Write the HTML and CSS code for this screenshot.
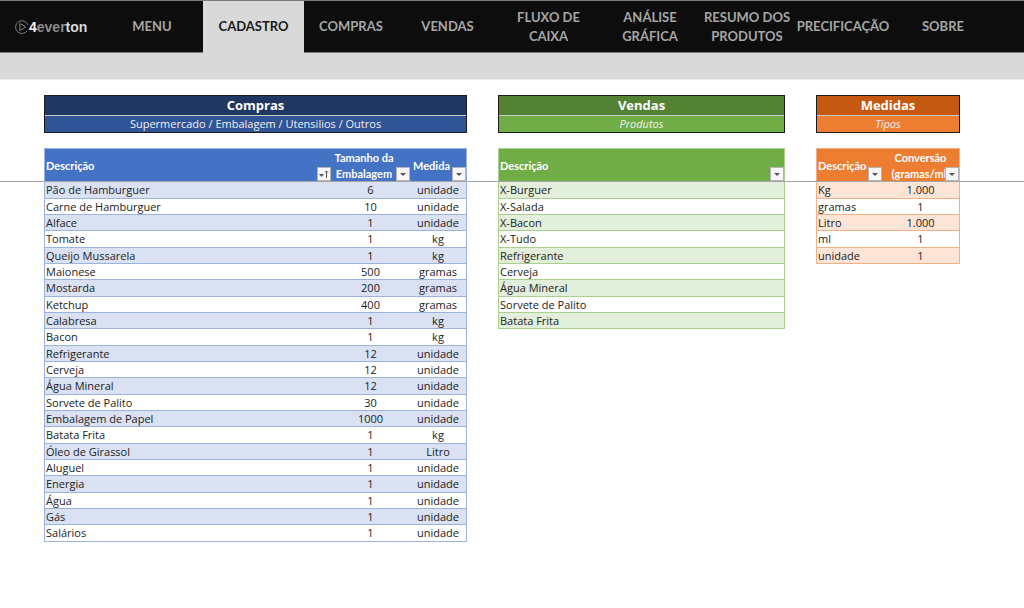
FILE: index.html
```html
<!DOCTYPE html>
<html lang="pt-BR">
<head>
<meta charset="utf-8">
<title>Cadastro</title>
<link rel="stylesheet" href="styles.css">
</head>
<body>
<header class="topbar">
  <a class="logo" href="#" aria-label="4everton">
    <svg class="logo-mark" viewBox="0 0 14 14" aria-hidden="true"><path d="M12.200 10.800A6.400 6.400 0 1 1 13 5M4.800 3.500v7L10.800 7z" fill="none" stroke="currentColor" stroke-width="1"/></svg>
    <span class="logo-text"><b class="logo-four">4</b>ever<b class="logo-ton">ton</b></span>
  </a>
  <nav class="tabs">
    <a class="tab" href="#">MENU</a>
    <a class="tab active" href="#" aria-current="page">CADASTRO</a>
    <a class="tab" href="#">COMPRAS</a>
    <a class="tab" href="#">VENDAS</a>
    <a class="tab" href="#">FLUXO DE<br>CAIXA</a>
    <a class="tab" href="#">ANÁLISE<br>GRÁFICA</a>
    <a class="tab" href="#">RESUMO DOS<br>PRODUTOS</a>
    <a class="tab" href="#">PRECIFICAÇÃO</a>
    <a class="tab" href="#">SOBRE</a>
  </nav>
</header>
<div class="band"></div>
<main class="sheet">
  <section class="block blue">
    <div class="title"><h2>Compras</h2><p class="plain">Supermercado / Embalagem / Utensilios / Outros</p></div>
    <table>
      <colgroup><col class="c-desc"><col class="c-size"><col class="c-unit"></colgroup>
      <thead><tr>
        <th>Descrição<button class="filter" aria-label="Filtrar Descrição"><svg viewBox="0 0 12 12"><path d="M1 6h5L3.500 9z" fill="#555"/><path d="M8.500 10V3M7 4.500L8.500 3 10 4.500" fill="none" stroke="#555"/></svg></button></th>
        <th class="beside">Tamanho da<br>Embalagem<button class="filter" aria-label="Filtrar Tamanho"><svg viewBox="0 0 12 12"><path d="M3 5h6L6 8z" fill="#555"/></svg></button></th>
        <th class="beside">Medida<button class="filter" aria-label="Filtrar Medida"><svg viewBox="0 0 12 12"><path d="M3 5h6L6 8z" fill="#555"/></svg></button></th>
      </tr></thead>
      <tbody>
        <tr><td>Pão de Hamburguer</td><td>6</td><td>unidade</td></tr>
        <tr><td>Carne de Hamburguer</td><td>10</td><td>unidade</td></tr>
        <tr><td>Alface</td><td>1</td><td>unidade</td></tr>
        <tr><td>Tomate</td><td>1</td><td>kg</td></tr>
        <tr><td>Queijo Mussarela</td><td>1</td><td>kg</td></tr>
        <tr><td>Maionese</td><td>500</td><td>gramas</td></tr>
        <tr><td>Mostarda</td><td>200</td><td>gramas</td></tr>
        <tr><td>Ketchup</td><td>400</td><td>gramas</td></tr>
        <tr><td>Calabresa</td><td>1</td><td>kg</td></tr>
        <tr><td>Bacon</td><td>1</td><td>kg</td></tr>
        <tr><td>Refrigerante</td><td>12</td><td>unidade</td></tr>
        <tr><td>Cerveja</td><td>12</td><td>unidade</td></tr>
        <tr><td>Água Mineral</td><td>12</td><td>unidade</td></tr>
        <tr><td>Sorvete de Palito</td><td>30</td><td>unidade</td></tr>
        <tr><td>Embalagem de Papel</td><td>1000</td><td>unidade</td></tr>
        <tr><td>Batata Frita</td><td>1</td><td>kg</td></tr>
        <tr><td>Óleo de Girassol</td><td>1</td><td>Litro</td></tr>
        <tr><td>Aluguel</td><td>1</td><td>unidade</td></tr>
        <tr><td>Energia</td><td>1</td><td>unidade</td></tr>
        <tr><td>Água</td><td>1</td><td>unidade</td></tr>
        <tr><td>Gás</td><td>1</td><td>unidade</td></tr>
        <tr><td>Salários</td><td>1</td><td>unidade</td></tr>
      </tbody>
    </table>
  </section>
  <section class="block green">
    <div class="title"><h2>Vendas</h2><p>Produtos</p></div>
    <table>
      <thead><tr><th>Descrição<button class="filter" aria-label="Filtrar Descrição"><svg viewBox="0 0 12 12"><path d="M3 5h6L6 8z" fill="#555"/></svg></button></th></tr></thead>
      <tbody>
        <tr><td>X-Burguer</td></tr>
        <tr><td>X-Salada</td></tr>
        <tr><td>X-Bacon</td></tr>
        <tr><td>X-Tudo</td></tr>
        <tr><td>Refrigerante</td></tr>
        <tr><td>Cerveja</td></tr>
        <tr><td>Água Mineral</td></tr>
        <tr><td>Sorvete de Palito</td></tr>
        <tr><td>Batata Frita</td></tr>
      </tbody>
    </table>
  </section>
  <section class="block orange">
    <div class="title"><h2>Medidas</h2><p>Tipos</p></div>
    <table>
      <colgroup><col class="c-kind"><col></colgroup>
      <thead><tr>
        <th>Descrição<button class="filter" aria-label="Filtrar Descrição"><svg viewBox="0 0 12 12"><path d="M3 5h6L6 8z" fill="#555"/></svg></button></th>
        <th>Conversão<br>(gramas/ml)<button class="filter" aria-label="Filtrar Conversão"><svg viewBox="0 0 12 12"><path d="M3 5h6L6 8z" fill="#555"/></svg></button></th>
      </tr></thead>
      <tbody>
        <tr><td>Kg</td><td>1.000</td></tr>
        <tr><td>gramas</td><td>1</td></tr>
        <tr><td>Litro</td><td>1.000</td></tr>
        <tr><td>ml</td><td>1</td></tr>
        <tr><td>unidade</td><td>1</td></tr>
      </tbody>
    </table>
  </section>
</main>
</body>
</html>
```
FILE: styles.css
```css
* { box-sizing: border-box; }
body {
  margin: 0;
  background: #fff;
  color: #222;
  font: 11px/16px "Open Sans", "Noto Sans", sans-serif;
}
h2, p { margin: 0; }

.topbar {
  display: grid;
  grid-template-columns: minmax(0, 101fr) minmax(0, 923fr);
  height: 53px;
  background: #0d0d0d;
  border-top: 1px solid #7b7b7b;
}
.logo {
  display: flex;
  align-items: center;
  padding-left: 15px;
  border-bottom: 1px solid #7b7b7b;
  color: #8c8c8c;
  text-decoration: none;
}
.logo-mark { width: 14px; height: 14px; flex: none; color: #808080; }
.logo-text { font: bold 14px/20px "Liberation Sans", sans-serif; }
.logo-four { color: #f2f2f2; }
.logo-ton { color: #d9d9d9; }
.tabs {
  display: grid;
  grid-template-columns: 102fr 101fr 94fr 99fr 103fr 100fr 94fr 98fr 102fr 30fr;
}
.tabs::after { content: ""; border-bottom: 1px solid #7b7b7b; }
.tab {
  display: flex;
  align-items: center;
  justify-content: center;
  min-width: 0;
  border-bottom: 1px solid #7b7b7b;
  color: #a6a6a6;
  font: bold 13px/19px Lato, sans-serif;
  text-align: center;
  text-decoration: none;
  white-space: nowrap;
}
.tab.active { background: #d9d9d9; border-color: #d9d9d9; color: #1a1a1a; }
.band { height: 27px; background: #d9d9d9; border-bottom: 1px solid #ececec; }

.sheet {
  position: relative;
  display: grid;
  grid-template-columns: 423fr 287fr 144fr;
  align-items: start;
  gap: 31px;
  padding: 15px 64px 32px 44px;
}
/* frozen pane divider */
.sheet::after {
  content: "";
  position: absolute;
  top: 101px;
  left: 0;
  right: 0;
  border-top: 1px solid #a6a6a6;
}
.title {
  margin-bottom: 15px;
  border: 1px solid #1c1c1c;
  color: #fff;
  text-align: center;
}
.title h2 {
  background: var(--dark);
  border-bottom: 1px solid #c8d0c8;
  font-size: 13px;
  line-height: 19px;
}
.title p { background: var(--mid); color: #f0f0f0; font-style: italic; }
.title .plain { font-style: normal; }

table {
  width: 100%;
  table-layout: fixed;
  border-collapse: separate;
  border-spacing: 0;
  border: 1px solid var(--line);
  border-bottom: 0;
}
.c-desc { width: 286px; }
.c-size { width: 79px; }
.c-kind { width: 65px; }
th {
  position: relative;
  height: 33px;
  padding: 0 1px;
  background: var(--head);
  color: #fff;
  font-family: Lato, sans-serif;
  text-align: center;
}
th.beside { padding: 0 13px 0 0; }
th:first-child, td:first-child { text-align: left; }
td {
  padding: 0 1px;
  border-bottom: 1px solid var(--line);
  line-height: 15px;
  text-align: center;
}
tbody tr:nth-child(3n + 1) td { line-height: 16px; }
tbody tr:nth-child(odd) { background: var(--stripe); }
.filter {
  position: absolute;
  right: 0;
  bottom: 1px;
  width: 14px;
  height: 14px;
  padding: 0;
  border: 1px solid #b4b4b4;
  background: #f7f7f9;
}
.filter svg { display: block; width: 12px; height: 12px; }

.blue { --dark: #203764; --mid: #305496; --head: #4472c4; --line: #9cb3e2; --stripe: #d9e1f2; }
.green { --dark: #548235; --mid: #70ad47; --head: #70ad47; --line: #a9d08e; --stripe: #e2efda; }
.orange { --dark: #c65911; --mid: #ed7d31; --head: #ed7d31; --line: #f4b084; --stripe: #fce4d6; }
```
